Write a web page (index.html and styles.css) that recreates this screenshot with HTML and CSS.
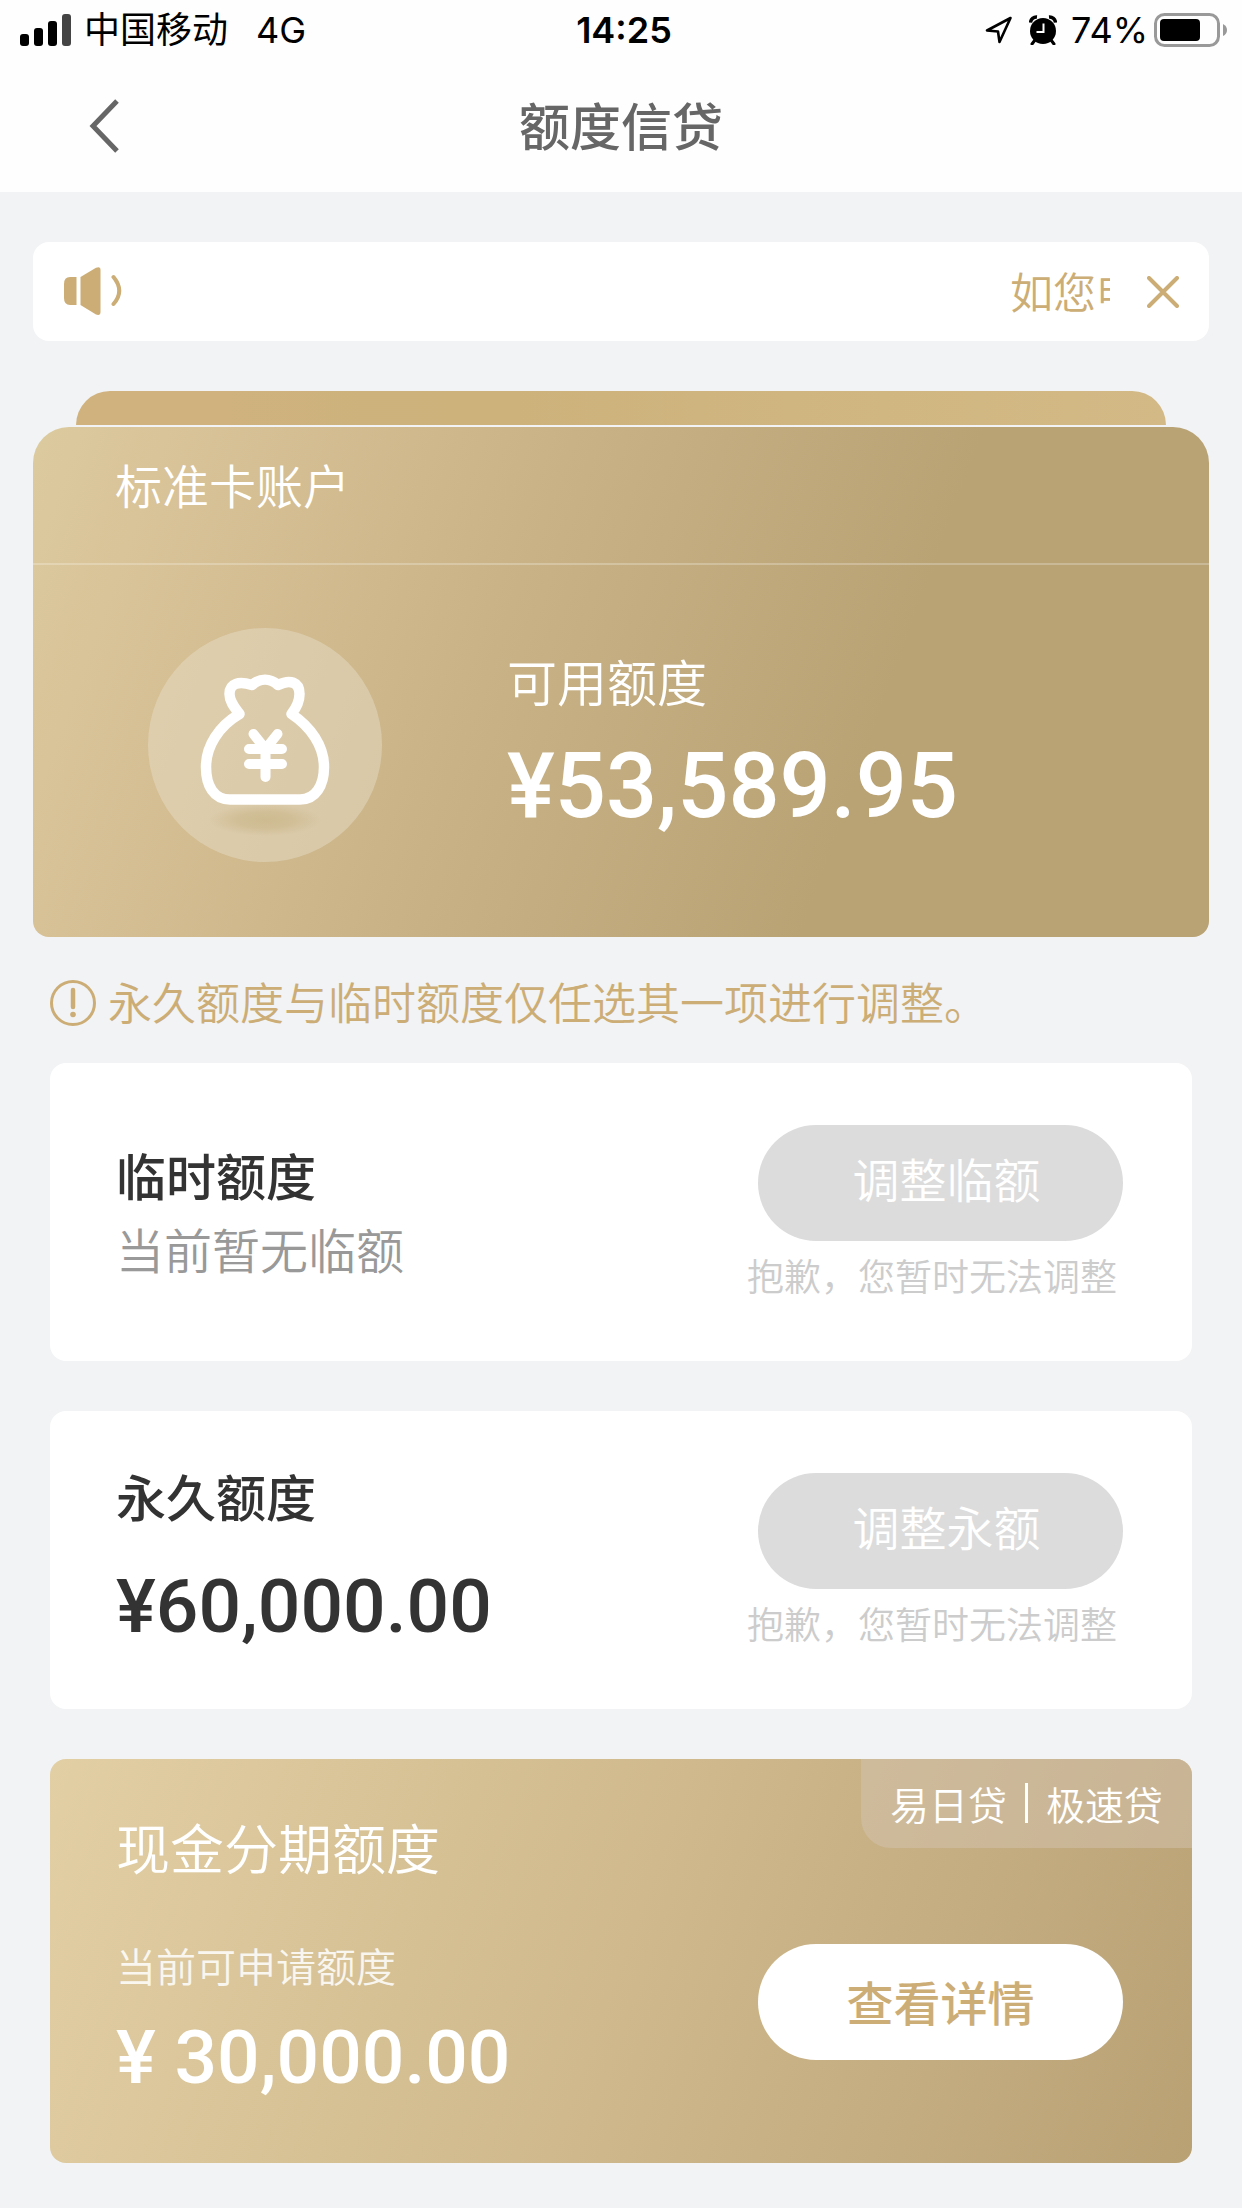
FILE: index.html
```html
<!DOCTYPE html>
<html lang="zh-CN">
<head>
<meta charset="utf-8">
<meta name="viewport" content="width=device-width, initial-scale=1">
<title>额度信贷</title>
<link rel="stylesheet" href="styles.css">
</head>
<body>
<header class="top">
  <div class="status">
    <div class="status-side">
      <svg class="signal" width="52" height="32" viewBox="0 0 52 32" aria-hidden="true">
        <rect x="0" y="20" width="9" height="12" rx="3"/>
        <rect x="14" y="14" width="9" height="18" rx="3"/>
        <rect x="28" y="7" width="9" height="25" rx="3"/>
        <rect x="42" y="0" width="9" height="32" rx="3" fill="#444"/>
      </svg>
      <span class="carrier">中国移动</span>
      <span>4G</span>
    </div>
    <time class="clock">14:25</time>
    <div class="status-side status-right">
      <svg width="28" height="28" viewBox="0 0 28 28" aria-hidden="true">
        <path d="M25.500 2 L2 14.500 L13 15.500 L14.500 26 Z" fill="none" stroke="#000" stroke-width="2.600" stroke-linejoin="round"/>
      </svg>
      <svg class="alarm" width="28" height="30" viewBox="0 0 28 30" aria-hidden="true">
        <path d="M1.500 7.500 A6 6 0 0 1 8 2 M26.500 7.500 A6 6 0 0 0 20 2" fill="none" stroke="#000" stroke-width="3.500"/>
        <circle cx="14" cy="16" r="13"/>
        <path d="M6 25 L3 29 M22 25 L25 29" stroke="#000" stroke-width="3" stroke-linecap="round"/>
        <path d="M14.500 8.500 V17 H7.500" fill="none" stroke="#fff" stroke-width="2"/>
      </svg>
      <span class="percent">74%</span>
      <svg width="74" height="34" viewBox="0 0 74 34" aria-hidden="true">
        <rect x="1.500" y="1.500" width="63" height="31" rx="9" fill="none" stroke="#999" stroke-width="3"/>
        <rect x="6" y="6" width="40" height="22" rx="4"/>
        <path d="M69 11 Q73 13 73 17 Q73 21 69 23 Z" fill="#999"/>
      </svg>
    </div>
  </div>
  <nav class="nav">
    <button class="back" type="button" aria-label="返回">
      <svg width="32" height="56" viewBox="0 0 32 56"><path d="M29 3 L5 28 L29 53" fill="none" stroke="#666" stroke-width="5"/></svg>
    </button>
    <h1 class="title">额度信贷</h1>
  </nav>
</header>

<main class="page">
  <section class="notice">
    <svg width="60" height="50" viewBox="0 0 60 50" aria-hidden="true">
      <path d="M7 10 H13.500 V38 H7 Q1 38 1 31 V17 Q1 10 7 10 Z" fill="#ccad75"/>
      <path d="M17.500 10 L33 0.800 Q37.500 -1 37.500 3 V45 Q37.500 49 33 47.500 L17.500 38 Z" fill="#ccad75"/>
      <path d="M50.500 10 Q62 24 50.500 37" fill="none" stroke="#ccad75" stroke-width="4" stroke-linecap="round"/>
    </svg>
    <p class="marquee">如您申请</p>
    <button class="close" type="button" aria-label="关闭">
      <svg width="32" height="32" viewBox="0 0 32 32"><path d="M2 2 L30 30 M30 2 L2 30" stroke="#ccad75" stroke-width="4" stroke-linecap="round"/></svg>
    </button>
  </section>

  <section class="account">
    <div class="account-tab"></div>
    <div class="account-card">
      <h2 class="account-name">标准卡账户</h2>
      <div class="account-body">
        <svg class="bag" width="234" height="234" viewBox="0 0 234 234" aria-hidden="true">
          <defs>
            <radialGradient id="shade"><stop offset="0" stop-color="#c4b080" stop-opacity=".6"/><stop offset=".5" stop-color="#c4b080" stop-opacity=".45"/><stop offset="1" stop-color="#c4b080" stop-opacity="0"/></radialGradient>
          </defs>
          <circle cx="117" cy="117" r="117" fill="#e8e0cc" fill-opacity=".45"/>
          <ellipse cx="117" cy="192" rx="56" ry="16" fill="url(#shade)"/>
          <g fill="none" stroke="#fff" stroke-linejoin="round" stroke-linecap="round">
            <path stroke-width="10.500" d="M82 171.500 H152 C168 171.500 176 157 176 139 C176 118 163 99 143.500 86 C149 79 151.500 73 151.500 66 C151.500 54 142 51 130 57 C122 50 112 50 104 57 C91 53 81.500 55 81.500 66 C81.500 74 87 80 91.500 86 C71 98 58 118 58 139 C58 158 66 171.500 82 171.500 Z"/>
            <path stroke-width="10" d="M105.500 106 L117.500 121 L129.500 106 M117.500 121 V149 M101 121 H134 M101 136 H134"/>
          </g>
        </svg>
        <div class="available">
          <p class="available-label">可用额度</p>
          <p class="amount amount-hero">¥53,589.95</p>
        </div>
      </div>
    </div>
  </section>

  <p class="tip">
    <svg width="46" height="46" viewBox="0 0 46 46" aria-hidden="true">
      <circle cx="23" cy="23" r="21.500" fill="none" stroke="#ccad75" stroke-width="3"/>
      <path d="M23 10 V27" stroke="#ccad75" stroke-width="4.500" stroke-linecap="round"/>
      <circle cx="23" cy="34.500" r="2.800" fill="#ccad75"/>
    </svg>
    <span class="tip-text">永久额度与临时额度仅任选其一项进行调整。</span>
  </p>

  <section class="limit">
    <div class="limit-info limit-info-center">
      <h2 class="limit-name">临时额度</h2>
      <p class="limit-none">当前暂无临额</p>
    </div>
    <div class="limit-action">
      <button class="pill pill-off" type="button" disabled>调整临额</button>
      <p class="sorry">抱歉，您暂时无法调整</p>
    </div>
  </section>

  <section class="limit">
    <div class="limit-info">
      <h2 class="limit-name">永久额度</h2>
      <p class="amount amount-dark">¥60,000.00</p>
    </div>
    <div class="limit-action">
      <button class="pill pill-off" type="button" disabled>调整永额</button>
      <p class="sorry">抱歉，您暂时无法调整</p>
    </div>
  </section>

  <section class="cash">
    <div>
      <h2 class="cash-name">现金分期额度</h2>
      <p class="cash-label">当前可申请额度</p>
      <p class="amount">¥ 30,000.00</p>
    </div>
    <div class="cash-side">
      <p class="tag"><span>易日贷</span><i class="tag-bar"></i><span>极速贷</span></p>
      <button class="pill pill-on" type="button">查看详情</button>
    </div>
  </section>
</main>
</body>
</html>
```
FILE: styles.css
```css
* {
  box-sizing: border-box;
}

body {
  margin: 0;
  background: #f2f3f5;
  color: #333;
  font-family: "Noto Sans CJK SC", sans-serif;
}

h1,
h2,
p {
  margin: 0;
}

svg {
  display: block;
  flex: none;
}

button {
  padding: 0;
  border: 0;
  background: none;
  font-family: inherit;
}

/* Status bar and title */
.top {
  background: #fefefe;
  height: 192px;
}

.status {
  display: grid;
  grid-template-columns: 1fr auto 1fr;
  align-items: center;
  height: 60px;
  padding: 0 14px 0 20px;
  color: #000;
  font-family: Inter, "Noto Sans CJK SC", sans-serif;
  font-size: 36px;
  line-height: 60px;
}

.status-side {
  display: flex;
  align-items: center;
}

.status-right {
  justify-content: flex-end;
}

.signal {
  margin-right: 12px;
}

.carrier {
  margin-right: 28px;
}

.clock {
  font-weight: 600;
}

.alarm {
  margin: 0 14px 0 16px;
}

.percent {
  margin-right: 6px;
}

.nav {
  display: grid;
  grid-template-columns: 1fr auto 1fr;
  align-items: center;
  height: 132px;
  padding: 0 88px;
}

.back {
  justify-self: start;
}

.title {
  padding-bottom: 4px;
  color: #666;
  font-size: 51px;
  font-weight: 500;
  line-height: 72px;
}

/* Page */
.page {
  padding: 50px 33px 44px;
}

.notice {
  display: flex;
  align-items: center;
  height: 99px;
  padding: 0 30px;
  border-radius: 16px;
  background: #fff;
}

.marquee {
  width: 100px;
  margin: 0 37px 0 auto;
  padding-bottom: 4px;
  overflow: hidden;
  color: #ccad75;
  font-size: 43px;
  font-weight: 350;
  line-height: 64px;
  white-space: nowrap;
}

/* Account card */
.account {
  margin-top: 50px;
  color: #fff;
}

.account-tab {
  height: 34px;
  margin: 0 43px 2px;
  border-radius: 34px 34px 0 0;
  background: linear-gradient(90deg, #d0b27e, #cdb27c 40%, #d3b985);
}

.account-card {
  border-radius: 36px 36px 16px 16px;
  background: linear-gradient(110deg, #dccb9f, #d9c398 10%, #b9a274 70%);
}

.account-name {
  height: 138px;
  padding-left: 82px;
  border-bottom: 2px solid rgba(255, 255, 255, 0.25);
  font-size: 47px;
  font-weight: 350;
  line-height: 114px;
}

.account-body {
  display: flex;
  gap: 125px;
  padding: 63px 82px 75px 115px;
}

.available-label {
  margin-top: 16px;
  font-size: 50px;
  font-weight: 350;
  line-height: 72px;
}

.amount {
  font-family: Roboto, sans-serif;
  font-size: 75px;
  font-weight: 500;
  line-height: 88px;
}

.amount-hero {
  font-size: 90px;
  line-height: 142px;
}

.amount-dark {
  margin-top: 30px;
}

/* Tip */
.tip {
  display: flex;
  align-items: center;
  gap: 12px;
  margin: 34px 17px 28px;
  color: #ccad75;
  font-size: 44px;
  font-weight: 350;
  line-height: 60px;
}

.tip-text {
  padding-bottom: 4px;
}

/* White limit cards */
.limit {
  display: flex;
  justify-content: space-between;
  height: 298px;
  margin: 0 17px 50px;
  padding: 0 69px 0 66px;
  border-radius: 16px;
  background: #fff;
}

.limit-info {
  padding-top: 47px;
}

.limit-info-center {
  padding-top: 74px;
}

.limit-name {
  font-size: 50px;
  font-weight: 500;
  line-height: 74px;
}

.limit-none {
  color: #999;
  font-size: 48px;
  font-weight: 350;
  line-height: 74px;
}

.limit-action {
  display: flex;
  flex-direction: column;
  align-items: flex-end;
  padding-top: 62px;
}

.pill {
  width: 365px;
  height: 116px;
  border-radius: 58px;
  font-size: 47px;
}

.pill-off {
  padding: 0 0 12px 12px;
  background: #dcdcdc;
  color: #fff;
  font-weight: 350;
}

.pill-on {
  padding-bottom: 4px;
  background: #fff;
  color: #ccad75;
  font-weight: 500;
}

.sorry {
  margin-top: 6px;
  padding-right: 6px;
  color: #ccc;
  font-size: 37px;
  font-weight: 350;
  line-height: 56px;
}

/* Cash card */
.cash {
  display: flex;
  justify-content: space-between;
  height: 404px;
  margin: 0 17px;
  padding-left: 66px;
  border-radius: 16px;
  background: linear-gradient(110deg, #e2cfa3, #cfb98d 50%, #b9a174);
  color: #fff;
  overflow: hidden;
}

.cash-name {
  margin-top: 48px;
  font-size: 54px;
  font-weight: 350;
  line-height: 80px;
}

.cash-label {
  margin: 48px 0 18px;
  font-size: 40px;
  font-weight: 350;
  line-height: 60px;
  opacity: 0.85;
}

.cash-side {
  display: flex;
  flex-direction: column;
  align-items: flex-end;
}

.cash-side .pill {
  margin: 96px 69px 0 0;
}

.tag {
  display: flex;
  align-items: center;
  gap: 18px;
  height: 89px;
  padding: 0 29px 2px;
  border-radius: 0 0 0 30px;
  background: rgba(212, 196, 176, 0.5);
  font-size: 39px;
  font-weight: 350;
}

.tag-bar {
  width: 3px;
  height: 40px;
  background: #fff;
}
```
